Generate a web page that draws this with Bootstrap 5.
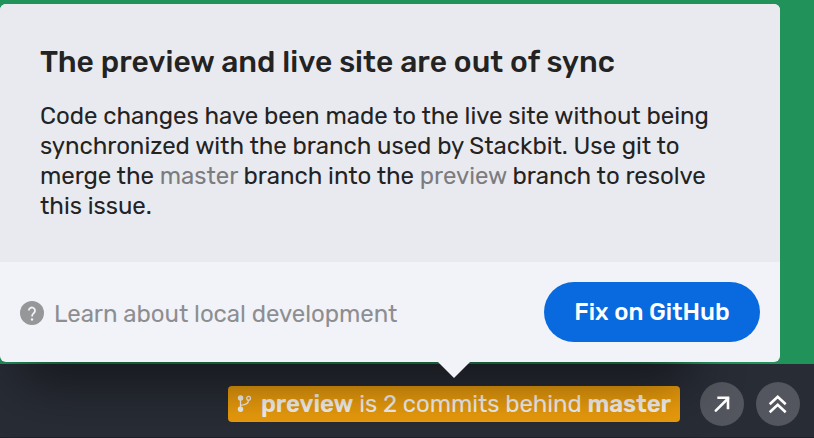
<!DOCTYPE html>
<html lang="en">
<head>
<meta charset="utf-8">
<meta name="viewport" content="width=device-width, initial-scale=1">
<title>Preview status</title>
<link href="https://cdn.jsdelivr.net/npm/bootstrap@5.3.0/dist/css/bootstrap.min.css" rel="stylesheet">
<style>
body{font-family:Rubik,Roboto,sans-serif;font-size:24px;line-height:30px;background:#22925b;color:#232323;height:438px}
.sync-pop{width:780px;height:358px;margin-top:4px;border-radius:6px;background:#f2f3f8;z-index:2;box-shadow:-35px 76px 50px -55px rgba(0,0,0,.48)}
.sync-body{height:258px;padding:40px 40px 0;background:#e9eaef;border-radius:6px 6px 0 0;letter-spacing:-.035px}
.sync-title{font-size:30px;line-height:36px;font-weight:500;margin:0 0 21px;letter-spacing:.02px}
.sync-foot{height:100px;padding:0 20px}
.ln{display:block;white-space:nowrap}
.branch{color:#7c7c7f}
.learn{color:#8d8e91;gap:10px;letter-spacing:-.035px}
.help-icon{margin-top:-2px}
.btn-fix{width:216px;height:60px;background:#0969de;color:#fff;font-size:24px;font-weight:500;letter-spacing:.03px}
.btn-fix:hover{background:#075bc2;color:#fff}
.sync-tail{left:437px;top:100%;margin-top:-1px}
.status-bar{height:74px;margin-top:2px;background:#282c35;padding:7px 14px 0 0;gap:12px;border-bottom:1px solid #20222b}
.status-tag{width:452px;height:36px;margin-right:8px;background:#e99b0c;border-radius:4px;color:#f4f1ed;padding-left:9px;gap:8px;letter-spacing:-.075px}
.status-tag strong{font-weight:600}
.round-btn{width:44px;height:44px;background:#53565e}
</style>
<script src="https://cdn.jsdelivr.net/npm/bootstrap@5.3.0/dist/js/bootstrap.bundle.min.js"></script>
</head>
<body class="d-flex flex-column overflow-hidden">
<section class="sync-pop position-relative flex-shrink-0">
  <div class="sync-body">
    <h1 class="sync-title text-nowrap">The preview and live site are out of sync</h1>
    <p class="m-0"><span class="ln">Code changes have been made to the live site without being</span>
    <span class="ln">synchronized with the branch used by Stackbit. Use git to</span>
    <span class="ln">merge the <span class="branch">master</span> branch into the <span class="branch">preview</span> branch to resolve</span>
    <span class="ln">this issue.</span></p>
  </div>
  <div class="sync-foot d-flex align-items-center justify-content-between">
    <a href="#" class="learn d-flex align-items-center text-decoration-none text-nowrap pt-1">
      <svg class="help-icon flex-shrink-0" width="24" height="24" viewBox="0 0 24 24"><circle cx="12" cy="12" r="12" fill="#969799"/><path d="M8.8 9.6a3.1 3.1 0 1 1 5.2 2.3c-1.2 1.1-2 1.6-2 3.7" fill="none" stroke="#f2f3f8" stroke-width="1.8"/><circle cx="12" cy="18.5" r="1.2" fill="#f2f3f8"/></svg>
      <span>Learn about local development</span>
    </a>
    <button class="btn btn-fix rounded-pill border-0 p-0"><span class="text-nowrap">Fix on GitHub</span></button>
  </div>
  <svg class="sync-tail position-absolute" width="34" height="17" viewBox="0 0 34 17"><path d="M0 0H34L17 17Z" fill="#f2f3f8"/></svg>
</section>
<footer class="status-bar d-flex justify-content-end align-items-center flex-shrink-0">
  <div class="status-tag d-flex align-items-center text-nowrap">
    <svg class="flex-shrink-0" width="16" height="18" viewBox="0 0 16 18" fill="none" stroke="#f4f1ed" stroke-width="1.3"><path d="M3.5 3v12M3.5 10.3c5.5-.3 8-1.5 8-5"/><circle cx="3.5" cy="3" r="2.1" fill="#f4f1ed"/><circle cx="3.5" cy="14.2" r="2.1" fill="#f4f1ed"/><circle cx="11.6" cy="3.2" r="1.9"/></svg>
    <span><strong>preview</strong> is 2 commits behind <strong>master</strong></span>
  </div>
  <button class="round-btn btn rounded-circle border-0 p-0 d-flex flex-shrink-0" aria-label="Open"><svg width="44" height="44" viewBox="0 0 44 44" fill="none" stroke="#fff" stroke-width="2.6"><path d="M15.8 28.7 28 16.5" stroke-linecap="round"/><path d="M17.3 15.8H28V27.2"/></svg></button>
  <button class="round-btn btn rounded-circle border-0 p-0 d-flex flex-shrink-0" aria-label="Expand"><svg width="44" height="44" viewBox="0 0 44 44" fill="none" stroke="#fff" stroke-width="2.6"><path d="M13.7 22.3 21.7 14.8 29.7 22.3M13.7 30.3 21.7 22.8 29.7 30.3"/></svg></button>
</footer>
</body>
</html>
